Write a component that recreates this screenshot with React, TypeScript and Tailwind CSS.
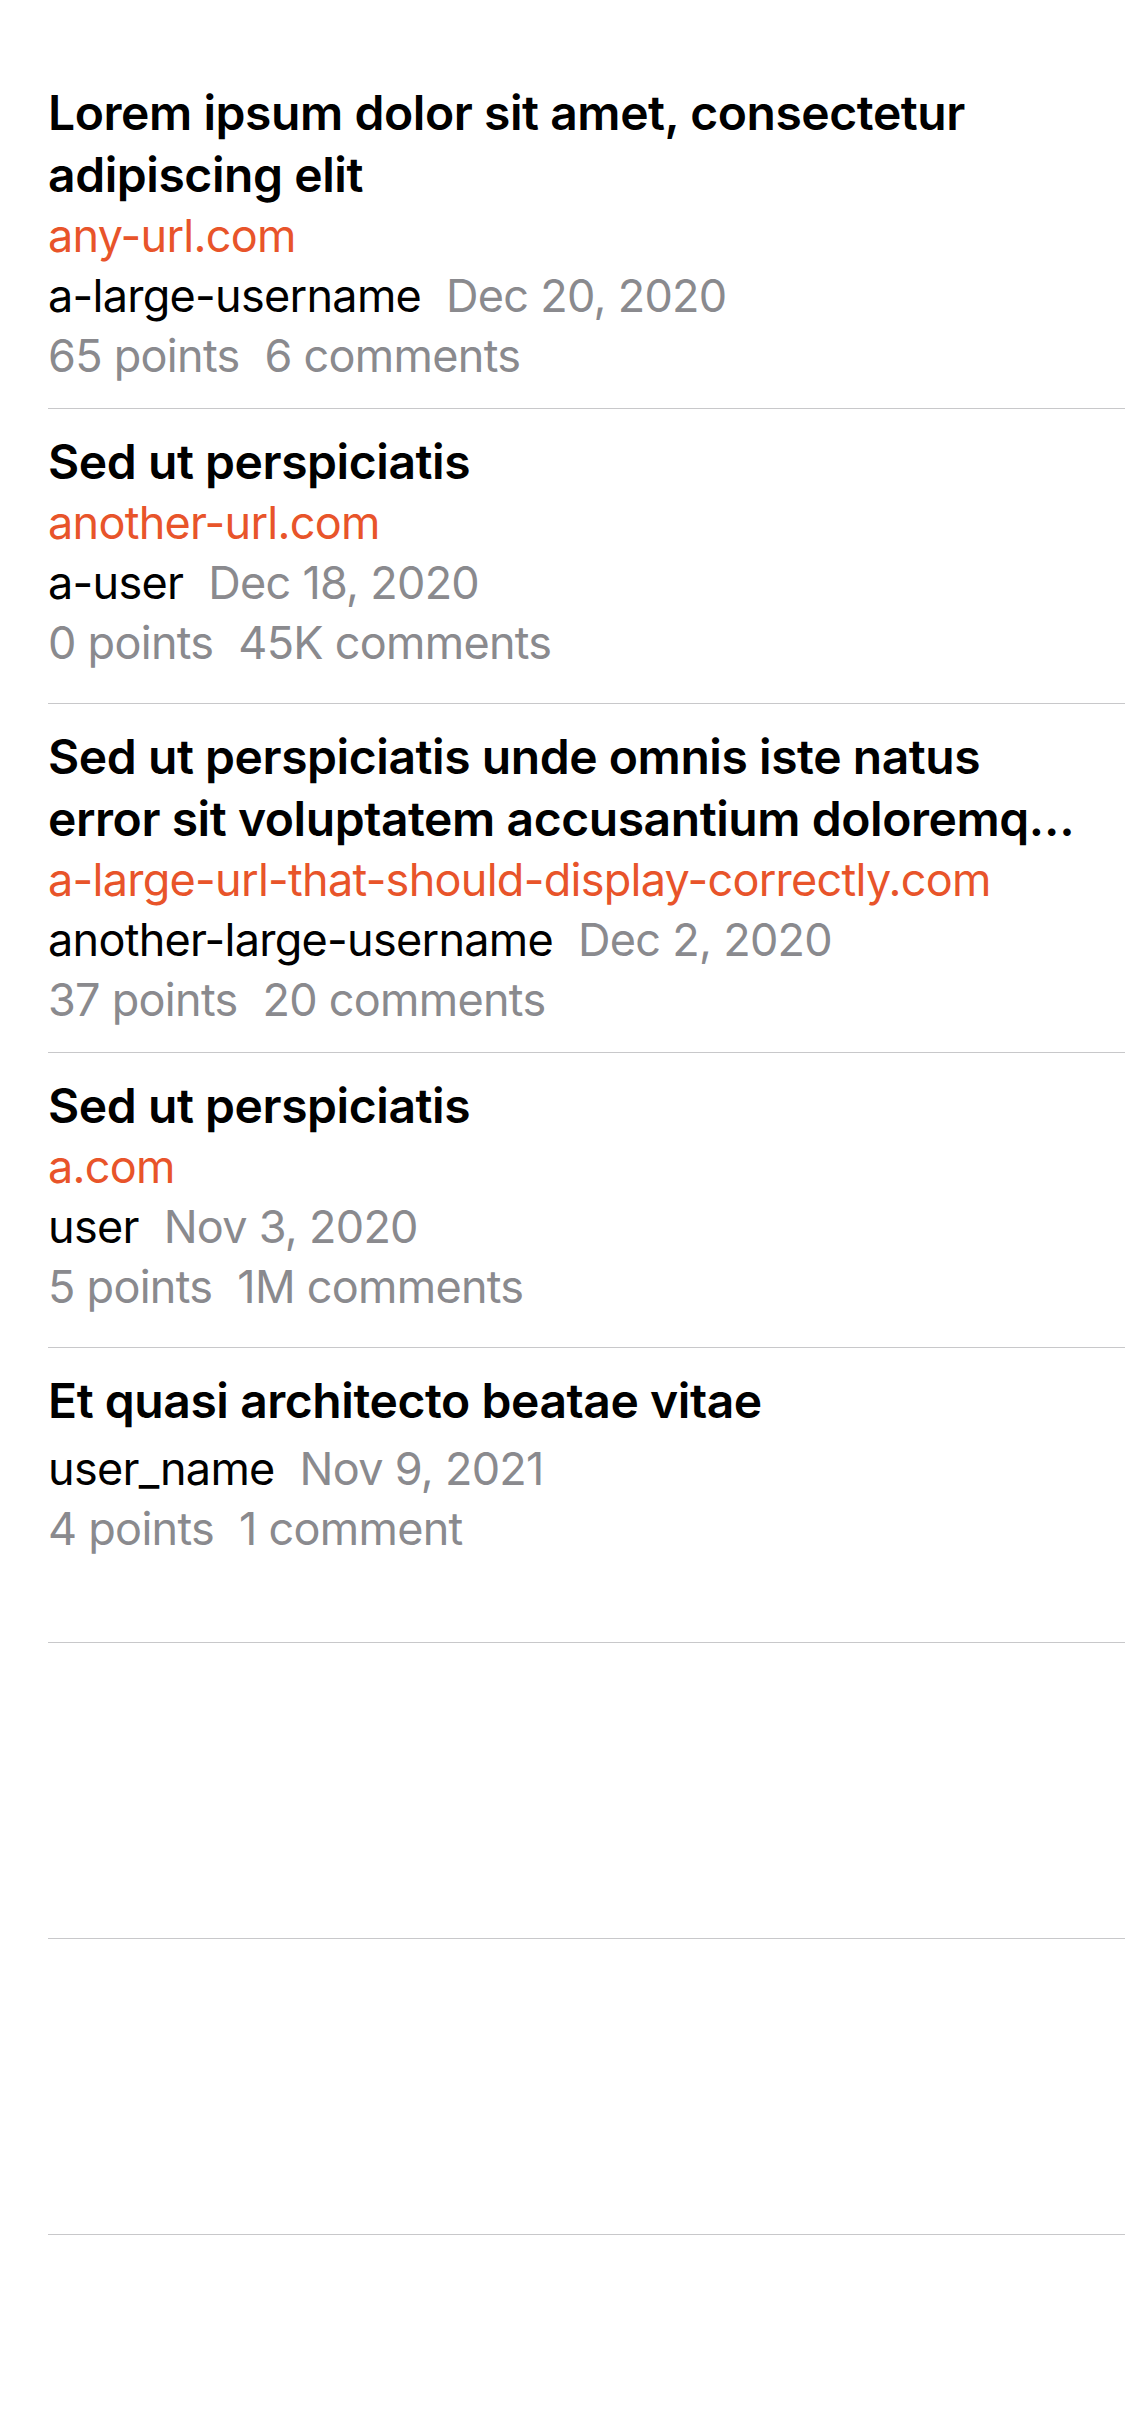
import React from 'react'

type Story = {
  id: number
  title: string
  // the second line of a long title is cut with an ellipsis, like the native list does
  titleLines?: [string, string]
  url?: string
  user: string
  date: string
  points: string
  comments: string
}

const stories: Story[] = [
  {
    id: 1,
    title: 'Lorem ipsum dolor sit amet, consectetur adipiscing elit',
    url: 'any-url.com',
    user: 'a-large-username',
    date: 'Dec 20, 2020',
    points: '65 points',
    comments: '6 comments',
  },
  {
    id: 2,
    title: 'Sed ut perspiciatis',
    url: 'another-url.com',
    user: 'a-user',
    date: 'Dec 18, 2020',
    points: '0 points',
    comments: '45K comments',
  },
  {
    id: 3,
    title:
      'Sed ut perspiciatis unde omnis iste natus error sit voluptatem accusantium doloremque laudantium, totam rem aperiam',
    titleLines: [
      'Sed ut perspiciatis unde omnis iste natus',
      'error sit voluptatem accusantium doloremque laudantium, totam rem aperiam',
    ],
    url: 'a-large-url-that-should-display-correctly.com',
    user: 'another-large-username',
    date: 'Dec 2, 2020',
    points: '37 points',
    comments: '20 comments',
  },
  {
    id: 4,
    title: 'Sed ut perspiciatis',
    url: 'a.com',
    user: 'user',
    date: 'Nov 3, 2020',
    points: '5 points',
    comments: '1M comments',
  },
  {
    id: 5,
    title: 'Et quasi architecto beatae vitae',
    user: 'user_name',
    date: 'Nov 9, 2021',
    points: '4 points',
    comments: '1 comment',
  },
]

function StoryRow({ story }: { story: Story }) {
  return (
    <div className="ml-[48px] min-h-[295px] border-b border-[#c8c8ca] pr-[48px] pt-[22px] pb-[22px]">
      {story.titleLines ? (
        <div className="text-[48px] leading-[62px] font-semibold tracking-[-0.009em] text-black" title={story.title}>
          <div className="whitespace-nowrap">{story.titleLines[0]}</div>
          <div className="truncate">{story.titleLines[1]}</div>
        </div>
      ) : (
        <div className="line-clamp-2 text-[48px] leading-[62px] font-semibold tracking-[-0.009em] text-black">
          {story.title}
        </div>
      )}
      {story.url ? (
        <div className="truncate text-[45px] leading-[60px] tracking-[-0.016em] text-[#e8542a]">{story.url}</div>
      ) : null}
      <div
        className={`flex gap-[25px] text-[45px] leading-[60px] tracking-[-0.016em] ${story.url ? '' : 'mt-[7px]'}`}
      >
        <span className="text-black">{story.user}</span>
        <span className="text-[#8a8a8e]">{story.date}</span>
      </div>
      <div className="flex gap-[25px] text-[45px] leading-[60px] tracking-[-0.016em] text-[#8a8a8e]">
        <span>{story.points}</span>
        <span>{story.comments}</span>
      </div>
    </div>
  )
}

export default function App() {
  return (
    <div className="h-[2436px] overflow-hidden bg-white pt-[60px] font-['Inter','Noto_Sans',sans-serif] antialiased">
      {stories.map((s) => (
        <StoryRow key={s.id} story={s} />
      ))}
      {/* empty placeholder rows */}
      <div className="ml-[48px] h-[296px] border-b border-[#c8c8ca]" />
      <div className="ml-[48px] h-[296px] border-b border-[#c8c8ca]" />
      <div className="ml-[48px] h-[296px]" />
    </div>
  )
}
